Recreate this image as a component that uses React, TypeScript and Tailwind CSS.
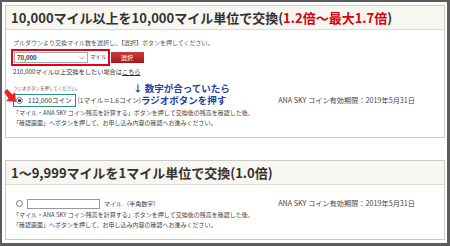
const JP = "font-['Noto_Sans_CJK_JP','Noto_Sans',sans-serif]";

function Radio({ checked = false, className = "" }: { checked?: boolean; className?: string }) {
  return (
    <span className={`relative block h-[7px] w-[7px] shrink-0 rounded-full border border-[#777] bg-white ${className}`}>
      {checked && <span className="absolute left-[1px] top-[1px] h-[3px] w-[3px] rounded-full bg-[#222]" />}
    </span>
  );
}

function Notes() {
  return (
    <div className="mt-[1px] text-[6px] leading-[10px] text-[#444]">
      <p>「マイル・ANA SKY コイン残高を計算する」ボタンを押して交換後の残高を確認した後、</p>
      <p>「確認画面」へボタンを押して、お申し込み内容の確認へお進みください。</p>
    </div>
  );
}

function Expiry() {
  return <span className="shrink-0 text-[7.2px] text-[#444]">ANA SKY コイン有効期限：2019年5月31日</span>;
}

export default function App() {
  return (
    <div
      className={`relative h-[246px] w-[450px] border-2 border-r-[3px] border-b-[3px] border-[#5c5c5c] bg-white pl-[3px] pr-[2px] pt-[3px] ${JP}`}
    >
      {/* card 1 */}
      <section className="h-[133px] border border-[#c9c9c9]">
        <h2 className="h-[24px] border-b border-[#dedbd3] bg-[#f8f6f1] pl-[5px] text-[13px] font-bold leading-[23px] text-[#333]">
          10,000マイル以上を10,000マイル単位で交換(<span className="text-[#d9000d]">1.2倍～最大1.7倍</span>)
        </h2>
        <div className="relative pl-[7px] pr-[29px] pt-[9px]">
          <p className="text-[6px] leading-[8px] text-[#555]">
            プルダウンより交換マイル数を選択し、【選択】ボタンを押してください。
          </p>
          <div className="mt-[2px] flex items-center">
            <div className="-ml-[2px] flex h-[17px] shrink-0 items-center border-2 border-[#e60012] pl-[1px] pr-[1px]">
              <div className="flex h-[11px] w-[74px] shrink-0 items-center justify-between border border-[#aaa] bg-white px-[2px]">
                <span className="text-[6px] font-bold text-[#333]">70,000</span>
                <svg width="6" height="4" viewBox="0 0 6 4">
                  <path d="M0.5 0.8 3 3.2 5.5 0.8" fill="none" stroke="#888" strokeWidth="0.8" />
                </svg>
              </div>
              <span className="ml-[2px] shrink-0 text-[5.5px] text-[#444]">マイル</span>
            </div>
            <button className="ml-[1px] h-[11px] w-[33px] shrink-0 bg-gradient-to-b from-[#c93a3f] to-[#a9141c] text-[6px] leading-[11px] text-white">
              選択
            </button>
          </div>
          <p className="mt-[1px] text-[6.2px] leading-[9px] text-[#333]">
            210,000マイル以上交換をしたい場合は<span className="underline">こちら</span>
          </p>
          <p className="mt-[9px] text-[4.5px] leading-[7px] text-[#555]">ラジオボタンを押してください。</p>
          <div className="mt-[2px] flex items-center justify-between">
            <div className="flex items-center">
              <div className="flex h-[13px] items-center gap-[5px] border-[1.5px] border-[#2f8f86] pl-[2px] pr-[3px]">
                <Radio checked />
                <span className="text-[6.6px] text-[#333]">112,000コイン</span>
              </div>
              <span className="ml-[2px] text-[6.6px] text-[#444]">(1マイル＝1.6コイン)</span>
            </div>
            <Expiry />
          </div>
          <Notes />

          {/* annotation */}
          <div className="absolute left-[127px] top-[52px] text-[9.5px] font-bold leading-[12px] text-[#1f3fa3]">
            <p>↓ 数字が合っていたら</p>
            <p className="pl-[8px]">ラジオボタンを押す</p>
          </div>
        </div>
      </section>

      {/* card 2 */}
      <section className="mt-[22px] h-[80px] border border-[#c9c9c9]">
        <h2 className="h-[24px] border-b border-[#dedbd3] bg-[#f8f6f1] pl-[5px] text-[13px] font-bold leading-[23px] text-[#333]">
          1～9,999マイルを1マイル単位で交換(1.0倍)
        </h2>
        <div className="pl-[7px] pr-[29px] pt-[13px]">
          <div className="flex h-[11px] items-center justify-between">
            <div className="flex items-center">
              <Radio className="ml-[3px]" />
              <span className="ml-[4px] block h-[10px] w-[73px] border border-[#999] bg-white" />
              <span className="ml-[4px] text-[6px] text-[#444]">マイル （半角数字）</span>
            </div>
            <Expiry />
          </div>
          <Notes />
        </div>
      </section>

      {/* red arrow */}
      <svg className="absolute left-[1px] top-[87px]" width="15" height="15" viewBox="0 0 15 15">
        <path d="M1 3 L4 0 L9.5 5.5 L12 3 L13 13 L3 12 L5.5 9.5 Z" fill="#e8232b" />
      </svg>
    </div>
  );
}
